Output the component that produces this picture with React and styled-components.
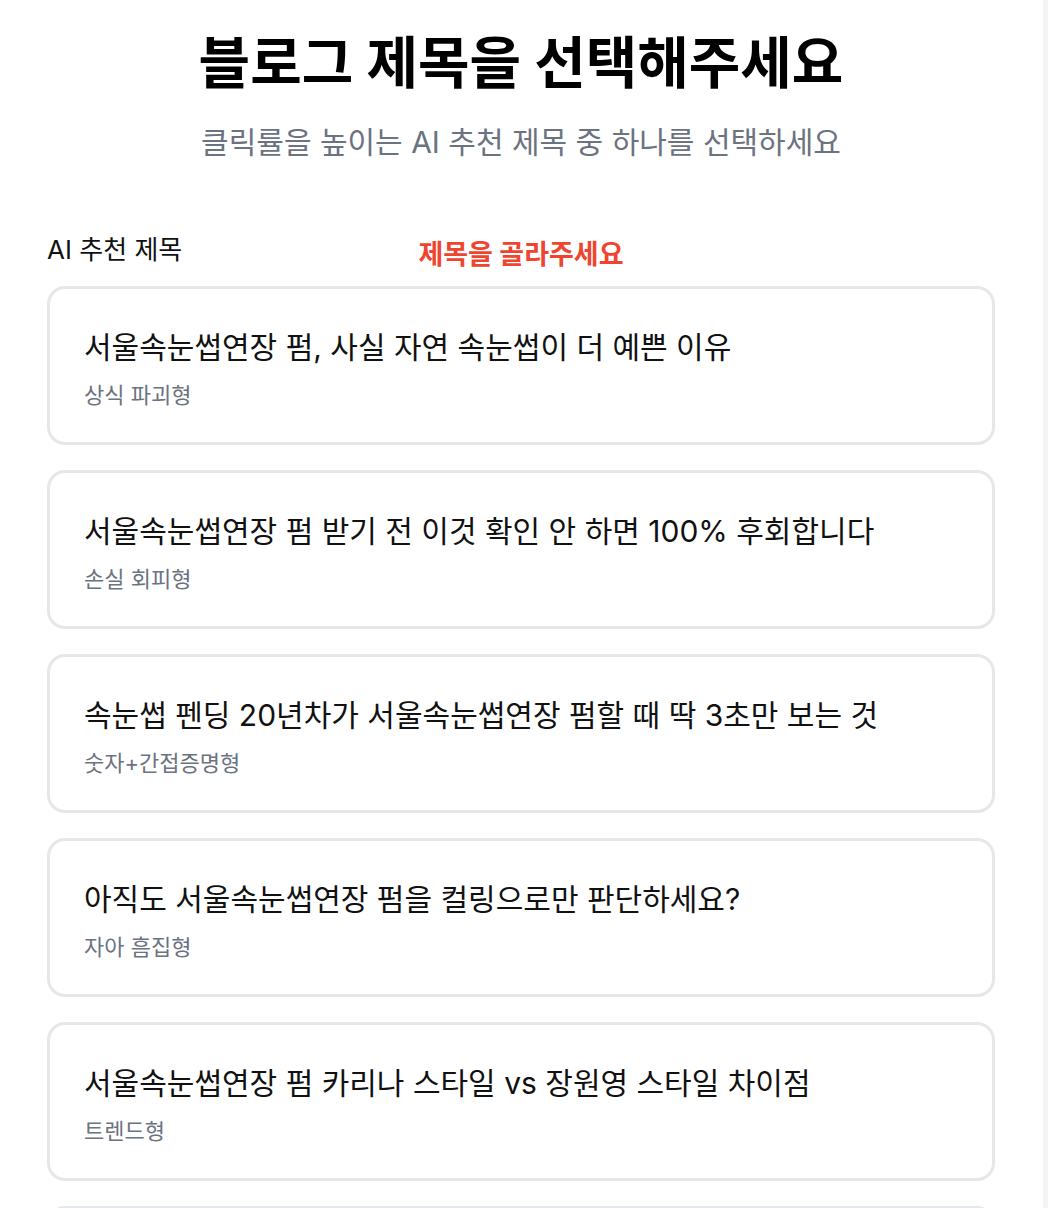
import React from "react";
import styled, { createGlobalStyle } from "styled-components";

const Global = createGlobalStyle`
  html, body { margin: 0; padding: 0; background: #ffffff; }
  body { font-family: Inter, "Noto Sans CJK KR", "Noto Sans", sans-serif; color: #111111; }
  * { box-sizing: border-box; }
`;

const Frame = styled.div`
  display: flex;
  min-height: 1208px;
  width: 100%;
`;

const Main = styled.main`
  flex: 1;
  display: flex;
  flex-direction: column;
  padding: 30px 48px 0 47px;
`;

const ScrollTrack = styled.div`
  width: 5px;
  background: #f4f4f5;
  flex-shrink: 0;
`;

const Heading = styled.h1`
  margin: 0;
  text-align: center;
  font-size: 56px;
  line-height: 67px;
  font-weight: 700;
  color: #000;
`;

const Subheading = styled.p`
  margin: 24px 0 0;
  text-align: center;
  font-size: 30px;
  line-height: 42px;
  font-weight: 400;
  color: #6b7280;
`;

const LabelRow = styled.div`
  margin-top: 71px;
  height: 36px;
  display: grid;
  grid-template-columns: 1fr auto 1fr;
  align-items: center;
`;

const SectionLabel = styled.span`
  font-size: 26px;
  line-height: 36px;
  font-weight: 400;
  color: #111;
  transform: translateY(-2px);
`;

const Hint = styled.span`
  font-size: 27px;
  line-height: 36px;
  font-weight: 700;
  color: #ef4530;
  transform: translateY(3px);
`;

const CardList = styled.div`
  margin-top: 16px;
  display: flex;
  flex-direction: column;
  gap: 25px;
`;

const Card = styled.button`
  all: unset;
  box-sizing: border-box;
  display: flex;
  flex-direction: column;
  gap: 12px;
  height: 159px;
  padding: 37px 34px 0;
  border: 3px solid #e5e7eb;
  border-radius: 18px;
  background: #fff;
  cursor: pointer;
  font-family: Inter, "Noto Sans CJK KR", sans-serif;
`;

const CardTitle = styled.span`
  font-size: 30px;
  line-height: 42px;
  font-weight: 400;
  color: #111;
  white-space: nowrap;
`;

const CardType = styled.span`
  font-size: 22px;
  line-height: 30px;
  font-weight: 400;
  color: #6b7280;
`;

const titles = [
  { title: "서울속눈썹연장 펌, 사실 자연 속눈썹이 더 예쁜 이유", type: "상식 파괴형" },
  { title: "서울속눈썹연장 펌 받기 전 이것 확인 안 하면 100% 후회합니다", type: "손실 회피형" },
  { title: "속눈썹 펜딩 20년차가 서울속눈썹연장 펌할 때 딱 3초만 보는 것", type: "숫자+간접증명형" },
  { title: "아직도 서울속눈썹연장 펌을 컬링으로만 판단하세요?", type: "자아 흠집형" },
  { title: "서울속눈썹연장 펌 카리나 스타일 vs 장원영 스타일 차이점", type: "트렌드형" },
  { title: "서울속눈썹연장 펌 후기 모음", type: "후기형" },
];

export default function App() {
  return (
    <>
      <Global />
      <Frame>
        <Main>
          <Heading>블로그 제목을 선택해주세요</Heading>
          <Subheading>클릭률을 높이는 AI 추천 제목 중 하나를 선택하세요</Subheading>
          <LabelRow>
            <SectionLabel>AI 추천 제목</SectionLabel>
            <Hint>제목을 골라주세요</Hint>
            <span />
          </LabelRow>
          <CardList>
            {titles.map((t) => (
              <Card key={t.title} type="button">
                <CardTitle>{t.title}</CardTitle>
                <CardType>{t.type}</CardType>
              </Card>
            ))}
          </CardList>
        </Main>
        <ScrollTrack />
      </Frame>
    </>
  );
}
